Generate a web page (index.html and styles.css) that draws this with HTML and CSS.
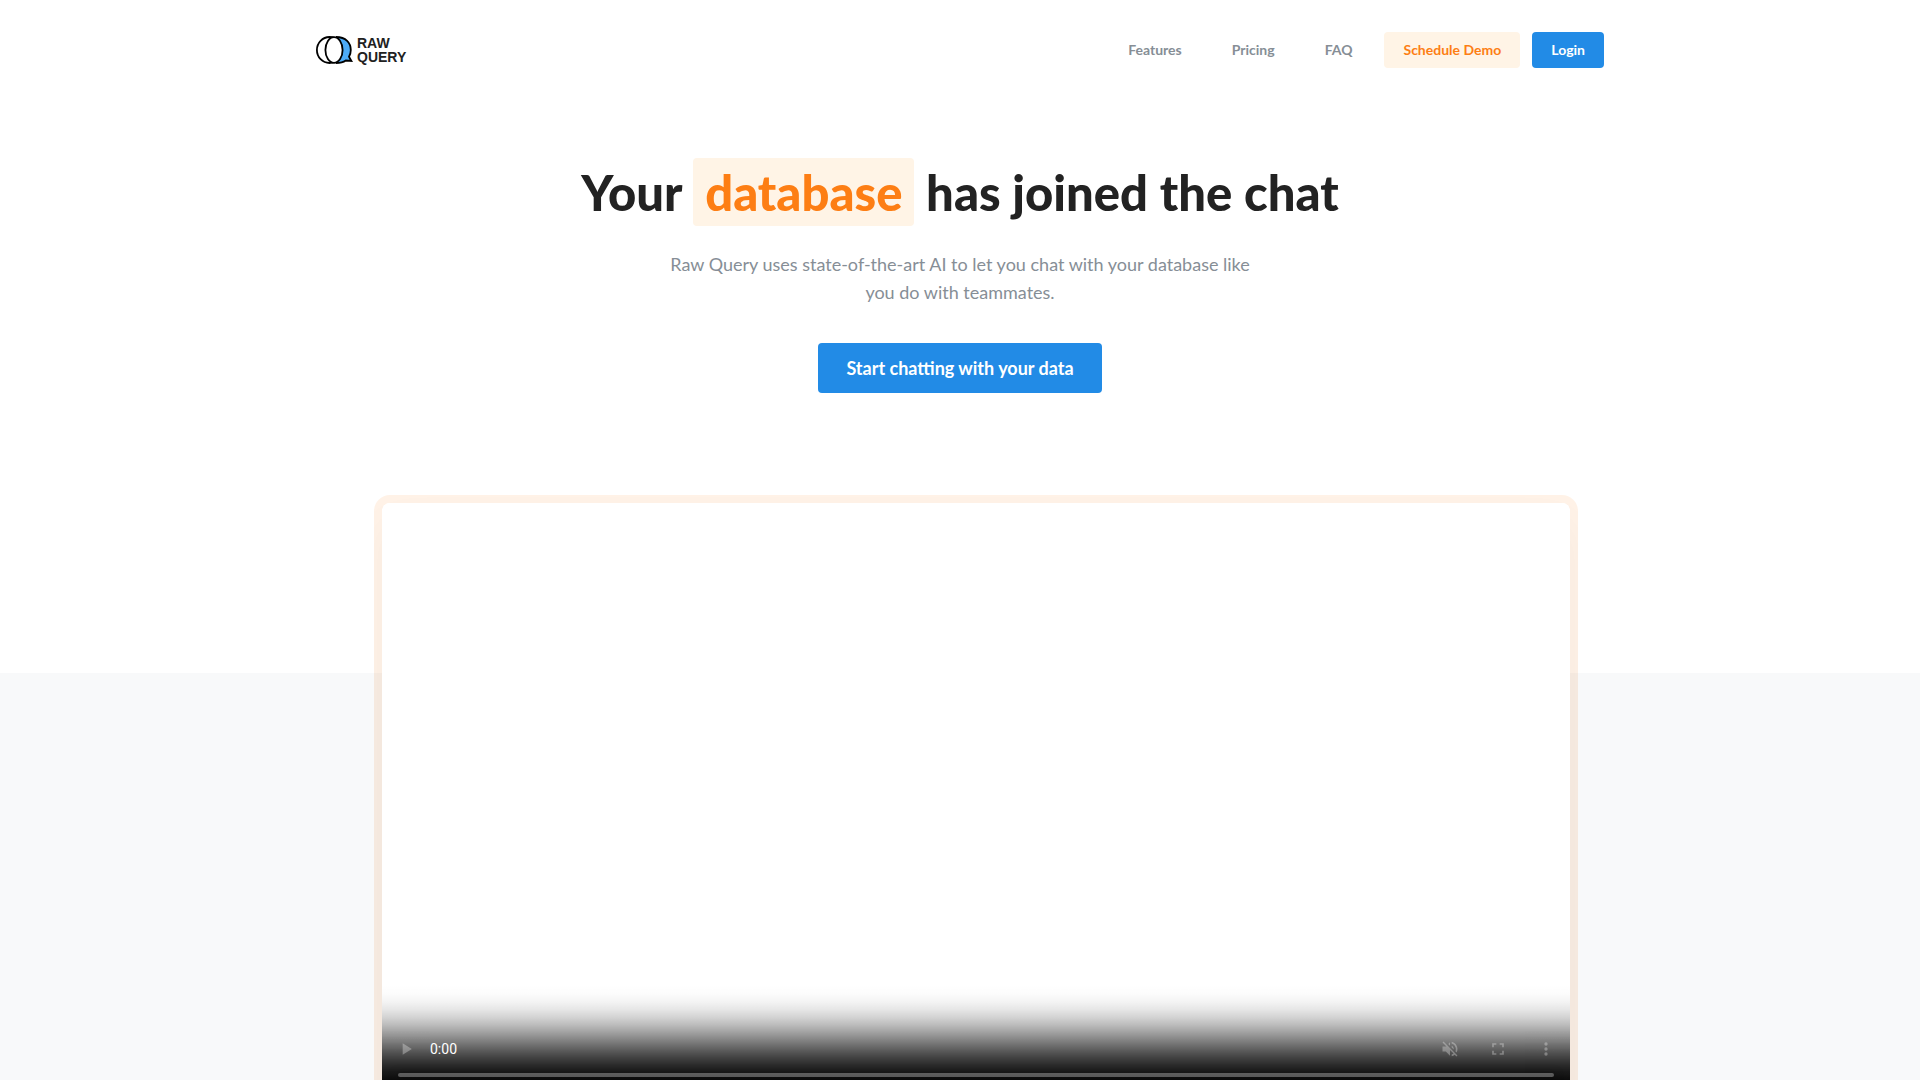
FILE: index.html
```html
<!DOCTYPE html>
<html lang="en">
<head>
    <meta charset="UTF-8">
    <meta name="viewport" content="width=device-width, initial-scale=1.0">
    <title>Raw Query</title>
    <link rel="stylesheet" href="styles.css">
</head>
<body>
    <header class="header">
        <a class="logo" href="#">
            <svg class="logo-mark" viewBox="0 0 38 30" width="38" height="30" aria-hidden="true">
                <path d="M20 2 C30 2 34.8 8 34.8 15 C34.8 17.5 34.1 19.7 33 21.7 L35.4 26 L29.8 25.5 C27.3 27.3 24.5 28 20 28 Z" fill="#4dabf7"/>
                <path d="M20 2 C30 2 34.8 8 34.8 15 C34.8 17.5 34.1 19.7 33 21.7 L35.4 26 L29.8 25.5 C27.3 27.3 24.5 28 20 28" fill="none" stroke="#000" stroke-width="1.8"/>
                <ellipse cx="13.5" cy="15" rx="12.6" ry="13" fill="#fff" stroke="#000" stroke-width="1.8"/>
                <ellipse cx="18" cy="15" rx="8.6" ry="12.8" fill="#fff" stroke="#000" stroke-width="1.8"/>
            </svg>
            <span class="logo-text">RAW<br>QUERY</span>
        </a>
        <nav class="nav">
            <a class="nav-link" href="#features">Features</a>
            <a class="nav-link" href="#pricing">Pricing</a>
            <a class="nav-link" href="#faq">FAQ</a>
            <button class="btn btn-light" type="button">Schedule Demo</button>
            <button class="btn btn-primary" type="button">Login</button>
        </nav>
    </header>

    <main>
        <section class="hero">
            <h1 class="title">Your <span class="highlight">database</span> has joined the chat</h1>
            <p class="description">Raw Query uses state-of-the-art AI to let you chat with your database like you do with teammates.</p>
            <button class="btn btn-primary btn-large" type="button">Start chatting with your data</button>
        </section>

        <section class="demo">
            <div class="demo-inner">
                <div class="demo-frame">
                    <video class="demo-video" controls muted poster="data:image/svg+xml,%3Csvg xmlns='http://www.w3.org/2000/svg' width='16' height='9' preserveAspectRatio='none' viewBox='0 0 16 9'%3E%3Crect width='16' height='9' fill='white'/%3E%3C/svg%3E"></video>
                </div>
            </div>
        </section>
    </main>
</body>
</html>
```
FILE: styles.css
```css
* {
    box-sizing: border-box;
}

body {
    margin: 0;
    font-family: Lato, sans-serif;
    font-size: 16px;
    color: #212529;
    background: #fff;
}

/* Header */
.header {
    display: flex;
    align-items: center;
    justify-content: space-between;
    max-width: 1320px;
    height: 100px;
    margin: 0 auto;
    padding: 0 16px;
}

.logo {
    display: flex;
    align-items: center;
    gap: 3px;
    color: #212121;
    text-decoration: none;
}

.logo-text {
    font: bold 14px/14px "Liberation Sans", Arial, sans-serif;
}

.nav {
    display: flex;
    align-items: center;
}

.nav-link {
    margin-right: 26px;
    padding: 8px 12px 10px;
    color: #868e96;
    font-size: 14px;
    font-weight: 700;
    text-decoration: none;
}

.nav-link:nth-child(3) {
    margin-right: 20px;
}

/* Buttons */
.btn {
    height: 36px;
    padding: 0 18px 2px;
    border: 1px solid transparent;
    border-radius: 4px;
    font-family: inherit;
    font-size: 14px;
    font-weight: 700;
    cursor: pointer;
}

.btn-light {
    margin-right: 12px;
    color: #fd7e14;
    background: #fff4e6;
}

.btn-primary {
    color: #fff;
    background: #228be6;
}

.btn-large {
    height: 50px;
    padding: 0 27px;
    font-size: 18px;
}

/* Hero */
.hero {
    padding: 58px 16px 102px;
    text-align: center;
}

.title {
    margin: 0 0 24px;
    color: #222;
    font-size: 49px;
    font-weight: 900;
    line-height: 68px;
}

.highlight {
    display: inline-block;
    padding: 0 12px;
    border-radius: 4px;
    color: #fd7e14;
    background: #fff4e6;
}

.description {
    max-width: 600px;
    margin: 0 auto 37px;
    color: #868e96;
    font-size: 18px;
    line-height: 28px;
}

/* Demo video, the lower part sits on a grey band */
.demo {
    background: linear-gradient(to bottom, #fff 178px, #f8f9fa 178px);
}

.demo-inner {
    max-width: 1172px;
    margin: 0 auto;
}

.demo-frame {
    width: calc(100% + 32px);
    padding: 8px;
    border-radius: 16px;
    background: rgba(253, 126, 20, 0.1);
    overflow: hidden;
}

.demo-video {
    display: block;
    width: 100%;
    height: 594px;
    border-radius: 8px;
    background: #fff;
    box-shadow: 0 20px 40px rgba(0, 0, 0, 0.04);
    object-fit: cover;
}
```
